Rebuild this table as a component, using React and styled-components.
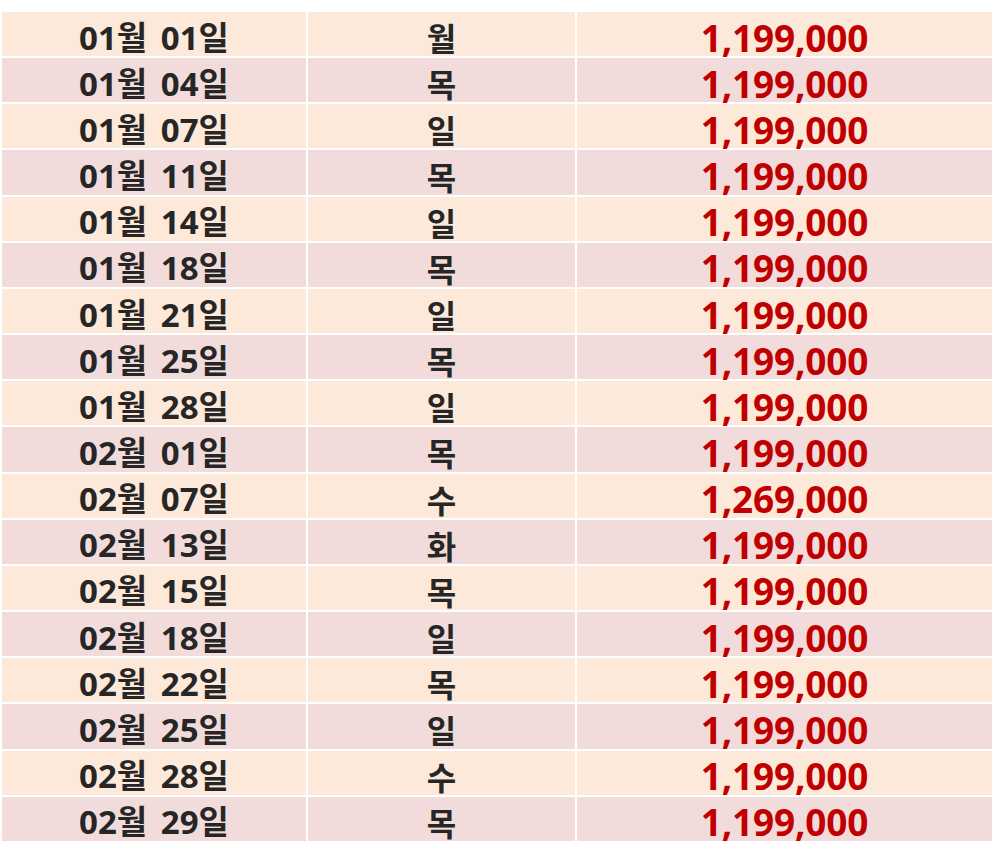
import styled, { createGlobalStyle } from "styled-components";

const rows = [
  ["01월 01일", "월", "1,199,000"],
  ["01월 04일", "목", "1,199,000"],
  ["01월 07일", "일", "1,199,000"],
  ["01월 11일", "목", "1,199,000"],
  ["01월 14일", "일", "1,199,000"],
  ["01월 18일", "목", "1,199,000"],
  ["01월 21일", "일", "1,199,000"],
  ["01월 25일", "목", "1,199,000"],
  ["01월 28일", "일", "1,199,000"],
  ["02월 01일", "목", "1,199,000"],
  ["02월 07일", "수", "1,269,000"],
  ["02월 13일", "화", "1,199,000"],
  ["02월 15일", "목", "1,199,000"],
  ["02월 18일", "일", "1,199,000"],
  ["02월 22일", "목", "1,199,000"],
  ["02월 25일", "일", "1,199,000"],
  ["02월 28일", "수", "1,199,000"],
  ["02월 29일", "목", "1,199,000"],
];

const GlobalStyle = createGlobalStyle`
  body {
    margin: 0;
    background: #fff;
    font-family: "Noto Sans", "Noto Sans CJK KR", sans-serif;
  }
`;

const Page = styled.div`
  padding: 12px 4px 0 2px;
`;

const Table = styled.div`
  display: grid;
  grid-template-columns: 304px 267px 1fr;
  grid-auto-rows: 44.17px;
  gap: 2px;
  background: #fff;
`;

const Cell = styled.div`
  background: ${(p) => (p.$alt ? "#f2dcdb" : "#fde9d9")};
  display: flex;
  align-items: center;
  justify-content: center;
  padding-top: 6px;
  box-sizing: border-box;
  font-weight: 700;
  white-space: nowrap;
  line-height: 1;
`;

const DateText = styled.span`
  font-family: "Noto Sans", "Noto Sans CJK KR", sans-serif;
  font-size: 33px;
  color: #262626;
  word-spacing: 5px;
`;

const DayText = styled.span`
  font-family: "Noto Sans CJK KR", sans-serif;
  font-size: 32px;
  color: #262626;
`;

const Price = styled.span`
  font-family: "Noto Sans", sans-serif;
  font-size: 37px;
  color: #c00000;
  letter-spacing: -0.2px;
`;

export default function App() {
  return (
    <Page>
      <GlobalStyle />
      <Table>
        {rows.map(([date, day, price], i) => {
          const alt = i % 2 === 1;
          return [
            <Cell key={`d${i}`} $alt={alt}>
              <DateText>{date}</DateText>
            </Cell>,
            <Cell key={`w${i}`} $alt={alt}>
              <DayText>{day}</DayText>
            </Cell>,
            <Cell key={`p${i}`} $alt={alt}>
              <Price>{price}</Price>
            </Cell>,
          ];
        })}
      </Table>
    </Page>
  );
}
